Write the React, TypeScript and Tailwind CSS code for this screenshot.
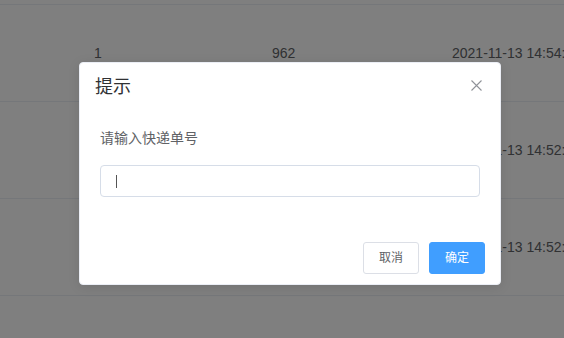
import React from 'react'

const rows = [
  { no: '1', count: '962', time: '2021-11-13 14:54:18' },
  { no: '2', count: '961', time: '2021-11-13 14:52:40' },
  { no: '3', count: '960', time: '2021-11-13 14:52:11' },
]

const font = { fontFamily: '"Liberation Sans", "Noto Sans CJK SC", sans-serif' }

const CloseIcon = () => (
  <svg width="11" height="11" viewBox="0 0 11 11" fill="none">
    <path d="M0.5 0.5L10.5 10.5M10.5 0.5L0.5 10.5" stroke="#909399" strokeWidth="1.1" />
  </svg>
)

export default function App() {
  return (
    <div className="relative w-[564px] h-[338px] overflow-hidden bg-white text-[14px] text-[#606266]" style={font}>
      {/* table behind the overlay */}
      <div className="h-[4px]" />
      <div className="border-t border-[#ebeef5]">
        {rows.map((r) => (
          <div
            key={r.no}
            className="grid grid-cols-[94px_178px_179px_1fr] h-[97px] items-center border-b border-[#ebeef5] whitespace-nowrap"
          >
            <div />
            <div>{r.no}</div>
            <div>{r.count}</div>
            <div className="pl-[1px]">{r.time}</div>
          </div>
        ))}
      </div>

      {/* mask */}
      <div className="absolute inset-0 bg-black/50" />

      {/* message box */}
      <div className="absolute left-[79px] top-[62px] w-[422px] bg-white border border-[#ebeef5] rounded-[4px] shadow-[0_2px_12px_rgba(0,0,0,0.1)] flex flex-col">
        <div className="relative pt-[15px] px-[15px]">
          <div className="text-[18px] leading-none h-[18px] text-[#303133]">提示</div>
          <button className="absolute right-[18px] top-[17px] flex">
            <CloseIcon />
          </button>
        </div>

        <div className="px-[20px] mt-[30px]">
          <p className="leading-[24px] text-[14px] text-[#606266]">请输入快递单号</p>
          <div className="mt-[15px] h-[32px] border border-[#d6dde8] rounded-[4px] flex items-center pl-[15px]">
            <span className="w-[1px] h-[13px] bg-[#555]" />
          </div>
        </div>

        <div className="mt-[45px] pb-[10px] pr-[15px] flex justify-end gap-[10px]">
          <button className="w-[56px] h-[32px] border border-[#dcdfe6] rounded-[3px] text-[12px] text-[#606266] bg-white">
            取消
          </button>
          <button className="w-[56px] h-[32px] border border-[#409eff] rounded-[3px] text-[12px] text-white bg-[#409eff]">
            确定
          </button>
        </div>
      </div>
    </div>
  )
}
